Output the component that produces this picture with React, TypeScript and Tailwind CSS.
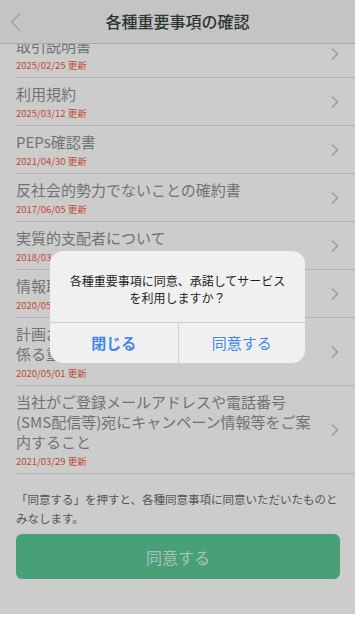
import React from "react";

const font = { fontFamily: '"Noto Sans CJK JP", "Noto Sans", sans-serif' };

function Chevron() {
  return (
    <svg width="8" height="12" viewBox="0 0 8 12" className="shrink-0">
      <path d="M1.5 1 L6.5 6 L1.5 11" fill="none" stroke="#c4c4c4" strokeWidth="1.6" strokeLinecap="round" strokeLinejoin="round" />
    </svg>
  );
}

type Item = { lines: string[]; date: string };

const items: Item[] = [
  { lines: ["取引説明書"], date: "2025/02/25 更新" },
  { lines: ["利用規約"], date: "2025/03/12 更新" },
  { lines: ["PEPs確認書"], date: "2021/04/30 更新" },
  { lines: ["反社会的勢力でないことの確約書"], date: "2017/06/05 更新" },
  { lines: ["実質的支配者について"], date: "2018/03/15 更新" },
  { lines: ["情報取扱いに関する同意書"], date: "2020/05/01 更新" },
  { lines: ["計画お知らせ等の連絡に", "係る重要事項について"], date: "2020/05/01 更新" },
  {
    lines: ["当社がご登録メールアドレスや電話番号", "(SMS配信等)宛にキャンペーン情報等をご案", "内すること"],
    date: "2021/03/29 更新",
  },
];

export default function App() {
  return (
    <div className="w-[358px] h-[618px] bg-white" style={font}>
      <div className="relative w-[355px] h-[614px] overflow-hidden bg-white flex flex-col">
        {/* Header */}
        <div className="h-[44px] shrink-0 bg-[#f5f5f5] border-b border-[#d6d6d6] grid grid-cols-[44px_1fr_44px] items-center relative z-10">
          <div className="pl-[10px] flex items-center">
            <svg width="12" height="20" viewBox="0 0 12 20">
              <path d="M10 1.5 L1.5 10 L10 18.5" fill="none" stroke="#cfcfcf" strokeWidth="1.6" strokeLinecap="round" strokeLinejoin="round" />
            </svg>
          </div>
          <div className="text-center text-[16px] font-medium text-[#3a4440] leading-[20px] pb-[1px]">各種重要事項の確認</div>
          <div />
        </div>

        {/* List */}
        <div className="flex-1 overflow-hidden">
          <div className="-mt-[14px] pl-[16px]">
            {items.map((it, i) => (
              <div key={i} className="flex items-center border-b border-[#e2e2e2] pr-[16px] pt-[6px] pb-[5px]">
                <div className="flex-1">
                  <div className="text-[15px] leading-[20px] text-[#8b928e] whitespace-nowrap">
                    {it.lines.map((l, j) => (
                      <div key={j}>{l}</div>
                    ))}
                  </div>
                  <div className="mt-[3px] text-[9.5px] leading-[13px] text-[#f05c3e]">{it.date}</div>
                </div>
                <Chevron />
              </div>
            ))}
          </div>
          <div className="px-[16px] pt-[16px] text-[11.5px] leading-[19px] text-[#6b6b6b] whitespace-nowrap">
            <div>「同意する」を押すと、各種同意事項に同意いただいたものと</div>
            <div>みなします。</div>
          </div>
          <div className="pl-[16px] pr-[15px] mt-[6px]">
            <button className="w-full h-[45px] rounded-[6px] bg-[#5ac898] text-[16px] text-white/75 flex items-center justify-center">
              同意する
            </button>
          </div>
        </div>

        {/* Overlay */}
        <div className="absolute inset-0 bg-black/20 z-20" />

        {/* Alert */}
        <div className="absolute inset-0 z-30 flex items-center justify-center">
          <div className="w-[255px] rounded-[13px] bg-[#f0f0f0] overflow-hidden">
            <div className="px-4 pt-[21px] pb-[16px] text-center text-[12px] leading-[17px] text-[#1e1e1e]">
              <div>各種重要事項に同意、承諾してサービス</div>
              <div>を利用しますか？</div>
            </div>
            <div className="grid grid-cols-2 border-t border-[#cfcfcf] h-[41px]">
              <button className="flex items-center justify-center text-[15px] font-bold text-[#4388e6]">閉じる</button>
              <button className="flex items-center justify-center text-[15px] text-[#4388e6] border-l border-[#cfcfcf]">同意する</button>
            </div>
          </div>
        </div>
      </div>
    </div>
  );
}
